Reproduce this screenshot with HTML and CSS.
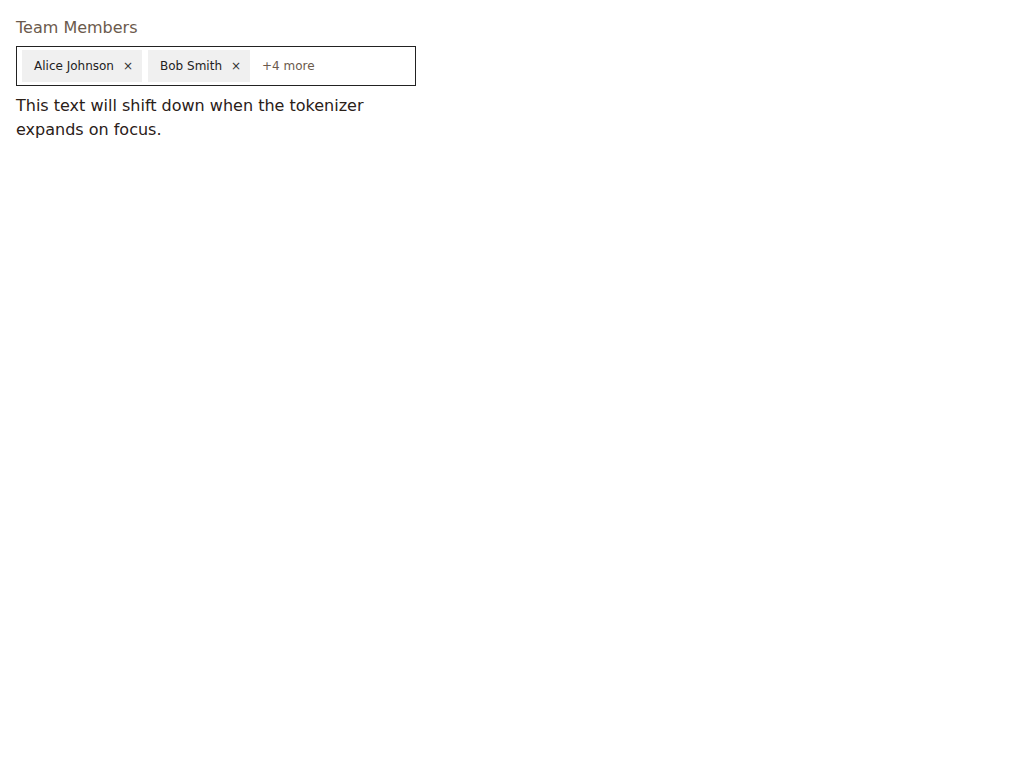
FILE: index.html
```html
<!DOCTYPE html>
<html>
<head>
<meta charset="utf-8">
<link rel="stylesheet" href="styles.css">
</head>
<body>
<div class="field">
  <label class="label">Team Members</label>
  <div class="tokenizer">
    <span class="token"><span class="token-text">Alice Johnson</span><span class="token-x">×</span></span>
    <span class="token"><span class="token-text">Bob Smith</span><span class="token-x">×</span></span>
    <span class="more">+4 more</span>
  </div>
  <p class="note">This text will shift down when the tokenizer expands on focus.</p>
</div>
</body>
</html>
```

FILE: styles.css
```css
html, body {
  margin: 0;
  padding: 0;
  background: #fff;
}
body {
  padding: 16px;
  font-family: "DejaVu Sans", sans-serif;
}
.field {
  width: 400px;
}
.label {
  display: block;
  font-size: 16px;
  line-height: 24px;
  color: #6b5a4c;
  margin-bottom: 6px;
}
.tokenizer {
  box-sizing: border-box;
  width: 400px;
  height: 40px;
  border: 1px solid #222;
  padding: 3px 5px;
  display: flex;
  align-items: center;
  gap: 6px;
}
.token {
  display: flex;
  align-items: center;
  height: 32px;
  padding: 0 9px 1px 12px;
  box-sizing: border-box;
  background: #f0f0f0;
  font-size: 12px;
  color: #222;
}
.token-x {
  margin-left: 9px;
  font-size: 12px;
  color: #333;
}
.more {
  margin-left: 6px;
  font-size: 12px;
  color: #6b5a4c;
}
.note {
  margin: 8px 0 0;
  font-size: 16px;
  line-height: 24px;
  color: #2a2018;
  width: 360px;
}
```
